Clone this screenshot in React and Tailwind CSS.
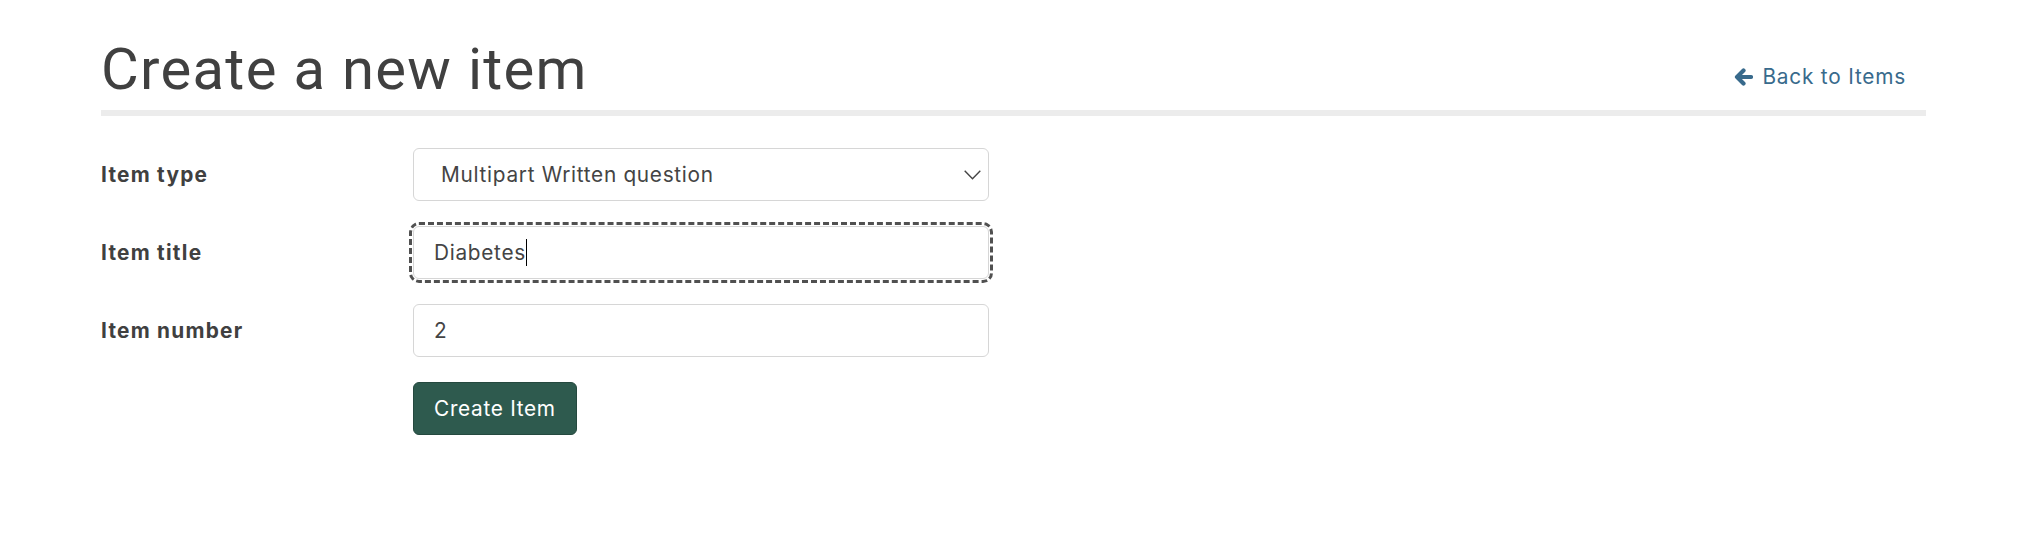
import React from "react";

const body = { fontFamily: "Inter, 'Noto Sans', sans-serif" };

function ArrowLeft() {
  return (
    <svg width="19" height="18" viewBox="0 0 19 18" fill="none" aria-hidden="true">
      <path
        d="M9.5 2.5 L3 9 L9.5 15.5 M3 9 H17"
        stroke="currentColor"
        strokeWidth="4.2"
        strokeLinecap="round"
        strokeLinejoin="round"
      />
    </svg>
  );
}

function Row({ label, children }) {
  return (
    <div className="grid grid-cols-[312px_576px] items-center">
      <div className="text-[20.8px] font-bold tracking-[1.25px] text-[#404040]">{label}</div>
      {children}
    </div>
  );
}

export default function App() {
  return (
    <div className="min-h-[540px] bg-white pl-[101px] pr-[112px] pt-[40px]" style={body}>
      <header className="flex items-end justify-between border-b-[6px] border-[#ececec] pb-[12px]">
        <h1
          className="text-[58px] leading-none font-normal tracking-[1.3px] text-[#404040]"
          style={{ fontFamily: "Roboto, 'Liberation Sans', sans-serif" }}
        >
          Create a new item
        </h1>
        <a
          href="#"
          className="mb-[6px] mr-[20px] flex items-center gap-[9px] text-[20.8px] leading-[31px] tracking-[0.8px] text-[#386a8c]"
        >
          <ArrowLeft />
          <span>Back to Items</span>
        </a>
      </header>

      <form className="mt-[32px] flex flex-col gap-[25px]">
        <Row label="Item type">
          <div className="flex h-[53px] items-center justify-between rounded-[6px] border border-[#d6d6d6] pl-[27px] pr-[7px] text-[20.8px] tracking-[0.7px] text-[#444]">
            <span>Multipart Written question</span>
            <svg width="17" height="10" viewBox="0 0 17 10" fill="none">
              <path d="M0.7 0.8 L8.5 8.8 L16.3 0.8" stroke="#444" strokeWidth="1.4" />
            </svg>
          </div>
        </Row>

        <Row label="Item title">
          <div
            role="textbox"
            className="flex h-[53px] items-center rounded-[6px] border border-[#d6d6d6] pl-[20px] text-[20.8px] tracking-[0.7px] text-[#444] outline-[3px] outline-dashed outline-[#505050] outline-offset-[1px]"
          >
            <span>Diabetes</span>
            <span className="h-[27px] w-[1.5px] bg-black" />
          </div>
        </Row>

        <Row label="Item number">
          <div className="flex h-[53px] items-center rounded-[6px] border border-[#d6d6d6] pl-[20px] text-[20.8px] text-[#444]">
            2
          </div>
        </Row>

        <Row label="">
          <div>
            <button
              type="button"
              className="h-[53px] rounded-[6px] border border-[#25493f] bg-[#2e5a4e] px-[20px] text-[20.8px] tracking-[0.7px] text-white"
            >
              Create Item
            </button>
          </div>
        </Row>
      </form>
    </div>
  );
}
